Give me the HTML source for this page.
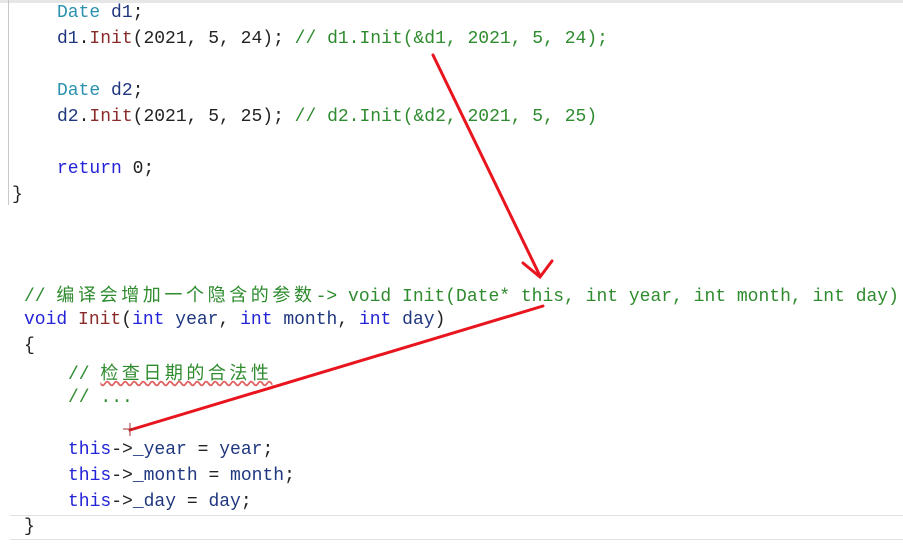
<!DOCTYPE html><html><head><meta charset="utf-8"><style>
body{margin:0;width:903px;height:552px;background:#fff;overflow:hidden;position:relative;font-family:"Liberation Mono","Noto Sans CJK SC",monospace;font-size:18px;}
.l{position:absolute;white-space:pre;line-height:26px;height:26px;color:#222;}
.k{color:#2323d8}.t{color:#2b91af}.f{color:#8b2a2a}.v{color:#1f377f}.c{color:#2e8b2e}
.cj{letter-spacing:3.6px;font-family:"Noto Sans CJK SC",sans-serif;font-size:18px}
</style></head><body>
<div style="position:absolute;left:0;top:0;width:903px;height:3px;background:#e6e6e6"></div>
<div style="position:absolute;left:8px;top:0;width:1px;height:205px;background:#c8c8c8"></div>
<div class="l" style="left:57px;top:0px"><span class="t">Date</span> <span class="v">d1</span>;</div>
<div class="l" style="left:57px;top:26px"><span class="v">d1</span>.<span class="f">Init</span>(2021, 5, 24); <span class="c">// d1.Init(&amp;d1, 2021, 5, 24);</span></div>
<div class="l" style="left:57px;top:78px"><span class="t">Date</span> <span class="v">d2</span>;</div>
<div class="l" style="left:57px;top:104px"><span class="v">d2</span>.<span class="f">Init</span>(2021, 5, 25); <span class="c">// d2.Init(&amp;d2, 2021, 5, 25)</span></div>
<div class="l" style="left:57px;top:156px"><span class="k">return</span> 0;</div>
<div class="l" style="left:12px;top:182px">}</div>
<div class="l" style="left:24px;top:281px"><span class="c">// <span class="cj">编译会增加一个隐含的参数</span>-&gt; void Init(Date* this, int year, int month, int day)</span></div>
<div class="l" style="left:24px;top:307px"><span class="k">void</span> <span class="f">Init</span>(<span class="k">int</span> <span class="v">year</span>, <span class="k">int</span> <span class="v">month</span>, <span class="k">int</span> <span class="v">day</span>)</div>
<div class="l" style="left:24px;top:333px">{</div>
<div class="l" style="left:68px;top:359px"><span class="c">// <span class="cj" style="letter-spacing:3.5px;text-decoration:underline wavy #e06060">检查日期的合法性</span></span></div>
<div class="l" style="left:68px;top:385px"><span class="c">// ...</span></div>
<div class="l" style="left:68px;top:437px"><span class="k">this</span>-&gt;<span class="v">_year</span> = <span class="v">year</span>;</div>
<div class="l" style="left:68px;top:463px"><span class="k">this</span>-&gt;<span class="v">_month</span> = <span class="v">month</span>;</div>
<div class="l" style="left:68px;top:489px"><span class="k">this</span>-&gt;<span class="v">_day</span> = <span class="v">day</span>;</div>
<div style="position:absolute;left:10px;top:515px;width:893px;height:1px;background:#e0e0e0"></div>
<div class="l" style="left:24px;top:514px">}</div>
<div style="position:absolute;left:10px;top:539px;width:893px;height:1px;background:#e0e0e0"></div>
<svg width="903" height="552" style="position:absolute;left:0;top:0">
<g stroke="#e8141e" stroke-width="3" fill="none" stroke-linecap="round">
<path d="M433 55 L540 276"/><path d="M523 263 L540 277 L552 261"/>
<path d="M543 306 L130 430"/>
</g>
<path d="M123 429 H137 M130 423 V436" stroke="#a03030" stroke-width="1"/>
</svg>
</body></html>
